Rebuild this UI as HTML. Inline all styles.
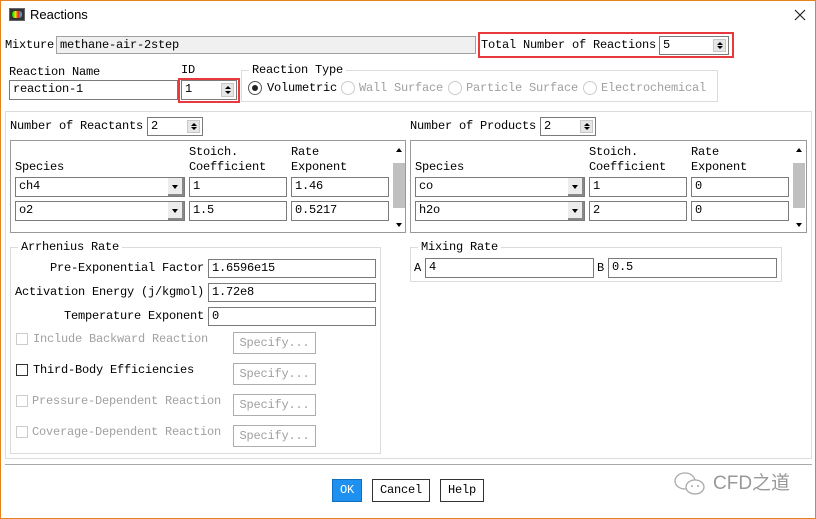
<!DOCTYPE html>
<html><head><meta charset="utf-8"><style>
*{box-sizing:border-box;margin:0;padding:0}
body{width:816px;height:519px;background:#fff;position:relative;overflow:hidden;font-family:"Liberation Mono","Noto Sans CJK SC",monospace;font-size:12px;letter-spacing:-0.2px;color:#000}
.a{position:absolute;white-space:nowrap;line-height:14px}
.b{position:absolute;border:1px solid #7a7a7a;background:#fff;padding-left:3px;line-height:17px;white-space:nowrap}
.g{color:#a0a0a0}
.grp{position:absolute;border:1px solid #dcdcdc}
.sp{position:absolute;right:2px;top:2px;width:13px;bottom:2px;background:#e6e6e6;border:1px solid #c8c8c8}
.sp:before{content:"";position:absolute;left:3px;top:2px;border:3px solid transparent;border-bottom:3px solid #000;border-top:0}
.sp:after{content:"";position:absolute;left:3px;bottom:2px;border:3px solid transparent;border-top:3px solid #000;border-bottom:0}
.dd{position:absolute;right:0;top:0;bottom:0;width:16px;background:#ececec;border-right:2px solid #888;border-bottom:2px solid #888}
.dd:after{content:"";position:absolute;left:4px;top:7px;border:3px solid transparent;border-top:4px solid #000;border-bottom:0}
.btn{position:absolute;border:1px solid #adadad;color:#a0a0a0;text-align:center;line-height:20px;height:22px;width:83px}
.cb{position:absolute;width:12px;height:12px;border:1px solid #ccc}
.rad{position:absolute;width:14px;height:14px;border:1px solid #ccc;border-radius:50%}
.red{position:absolute;border:2px solid #e8393f}
</style></head><body>
<div style="position:absolute;left:0;top:0;width:816px;height:519px;border:1px solid #e6821e"></div>
<!-- title -->
<div style="position:absolute;left:9px;top:8px;width:16px;height:13px;background:#333;border:1px solid #666"><div style="position:absolute;left:2px;top:2px;width:10px;height:7px;background:linear-gradient(90deg,#0c0 0,#ee0 35%,#f22 60%,#0cf 100%);border-radius:3px"></div></div>
<div class="a" style="left:30px;top:8px;font-family:'Liberation Sans',sans-serif;font-size:13px;letter-spacing:0">Reactions</div>
<svg style="position:absolute;left:794px;top:9px" width="12" height="12"><path d="M1 1L11 11M11 1L1 11" stroke="#222" stroke-width="1.2"/></svg>

<div class="a" style="left:5px;top:38px">Mixture</div>
<div class="b" style="left:56px;top:36px;width:420px;height:18px;background:#f0f0f0;border-color:#a0a0a0;line-height:16px">methane-air-2step</div>
<div class="red" style="left:478px;top:32px;width:256px;height:26px"></div>
<div class="a" style="left:481px;top:38px">Total Number of Reactions</div>
<div class="b" style="left:659px;top:36px;width:70px;height:19px">5<div class="sp"></div></div>

<div class="a" style="left:9px;top:65px">Reaction Name</div>
<div class="b" style="left:9px;top:80px;width:169px;height:20px">reaction-1</div>
<div class="a" style="left:181px;top:63px">ID</div>
<div class="red" style="left:178px;top:78px;width:62px;height:25px"></div>
<div class="b" style="left:181px;top:80px;width:56px;height:20px">1<div class="sp"></div></div>
<div class="grp" style="left:241px;top:70px;width:477px;height:32px"></div>
<div class="a" style="left:249px;top:63px;background:#fff;padding:0 3px">Reaction Type</div>
<div class="rad" style="left:248px;top:81px;border-color:#555"><div style="position:absolute;left:3px;top:3px;width:6px;height:6px;border-radius:50%;background:#222"></div></div>
<div class="a" style="left:267px;top:81px">Volumetric</div>
<div class="rad" style="left:341px;top:81px"></div><div class="a g" style="left:359px;top:81px">Wall Surface</div>
<div class="rad" style="left:448px;top:81px"></div><div class="a g" style="left:466px;top:81px">Particle Surface</div>
<div class="rad" style="left:583px;top:81px"></div><div class="a g" style="left:601px;top:81px">Electrochemical</div>

<div class="grp" style="left:5px;top:111px;width:807px;height:348px"></div>

<!-- reactants -->
<div class="a" style="left:10px;top:119px">Number of Reactants</div>
<div class="b" style="left:147px;top:117px;width:56px;height:19px">2<div class="sp"></div></div>
<div class="grp" style="left:10px;top:140px;width:396px;height:93px;border-color:#999"></div>
<div class="a" style="left:189px;top:145px">Stoich.</div><div class="a" style="left:291px;top:145px">Rate</div>
<div class="a" style="left:15px;top:160px">Species</div><div class="a" style="left:189px;top:160px">Coefficient</div><div class="a" style="left:291px;top:160px">Exponent</div>
<div class="b" style="left:15px;top:177px;width:170px;height:20px">ch4<div class="dd"></div></div>
<div class="b" style="left:189px;top:177px;width:98px;height:20px">1</div>
<div class="b" style="left:291px;top:177px;width:98px;height:20px">1.46</div>
<div class="b" style="left:15px;top:201px;width:170px;height:20px">o2<div class="dd"></div></div>
<div class="b" style="left:189px;top:201px;width:98px;height:20px">1.5</div>
<div class="b" style="left:291px;top:201px;width:98px;height:20px">0.5217</div>
<div style="position:absolute;left:393px;top:163px;width:12px;height:45px;background:#c0c0c0"></div>
<div style="position:absolute;left:396px;top:148px;border:3px solid transparent;border-bottom:4px solid #000;border-top:0"></div>
<div style="position:absolute;left:396px;top:223px;border:3px solid transparent;border-top:4px solid #000;border-bottom:0"></div>

<!-- products -->
<div class="a" style="left:410px;top:119px">Number of Products</div>
<div class="b" style="left:540px;top:117px;width:56px;height:19px">2<div class="sp"></div></div>
<div class="grp" style="left:410px;top:140px;width:397px;height:93px;border-color:#999"></div>
<div class="a" style="left:589px;top:145px">Stoich.</div><div class="a" style="left:691px;top:145px">Rate</div>
<div class="a" style="left:415px;top:160px">Species</div><div class="a" style="left:589px;top:160px">Coefficient</div><div class="a" style="left:691px;top:160px">Exponent</div>
<div class="b" style="left:415px;top:177px;width:170px;height:20px">co<div class="dd"></div></div>
<div class="b" style="left:589px;top:177px;width:98px;height:20px">1</div>
<div class="b" style="left:691px;top:177px;width:98px;height:20px">0</div>
<div class="b" style="left:415px;top:201px;width:170px;height:20px">h2o<div class="dd"></div></div>
<div class="b" style="left:589px;top:201px;width:98px;height:20px">2</div>
<div class="b" style="left:691px;top:201px;width:98px;height:20px">0</div>
<div style="position:absolute;left:793px;top:163px;width:12px;height:45px;background:#c0c0c0"></div>
<div style="position:absolute;left:796px;top:148px;border:3px solid transparent;border-bottom:4px solid #000;border-top:0"></div>
<div style="position:absolute;left:796px;top:223px;border:3px solid transparent;border-top:4px solid #000;border-bottom:0"></div>

<!-- arrhenius -->
<div class="grp" style="left:10px;top:247px;width:371px;height:207px"></div>
<div class="a" style="left:18px;top:240px;background:#fff;padding:0 3px">Arrhenius Rate</div>
<div class="a" style="left:50px;top:261px">Pre-Exponential Factor</div>
<div class="b" style="left:208px;top:259px;width:168px;height:19px">1.6596e15</div>
<div class="a" style="left:15px;top:285px">Activation Energy (j/kgmol)</div>
<div class="b" style="left:208px;top:283px;width:168px;height:19px">1.72e8</div>
<div class="a" style="left:64px;top:309px">Temperature Exponent</div>
<div class="b" style="left:208px;top:307px;width:168px;height:19px">0</div>
<div class="cb" style="left:16px;top:333px"></div><div class="a g" style="left:33px;top:332px">Include Backward Reaction</div>
<div class="btn" style="left:233px;top:332px">Specify...</div>
<div class="cb" style="left:16px;top:364px;border-color:#333"></div><div class="a" style="left:33px;top:363px">Third-Body Efficiencies</div>
<div class="btn" style="left:233px;top:363px">Specify...</div>
<div class="cb" style="left:16px;top:395px"></div><div class="a g" style="left:32px;top:394px">Pressure-Dependent Reaction</div>
<div class="btn" style="left:233px;top:394px">Specify...</div>
<div class="cb" style="left:16px;top:426px"></div><div class="a g" style="left:32px;top:425px">Coverage-Dependent Reaction</div>
<div class="btn" style="left:233px;top:425px">Specify...</div>

<!-- mixing -->
<div class="grp" style="left:410px;top:247px;width:372px;height:35px"></div>
<div class="a" style="left:418px;top:240px;background:#fff;padding:0 3px">Mixing Rate</div>
<div class="a" style="left:414px;top:261px">A</div>
<div class="b" style="left:425px;top:258px;width:169px;height:20px">4</div>
<div class="a" style="left:597px;top:261px">B</div>
<div class="b" style="left:608px;top:258px;width:169px;height:20px">0.5</div>

<div style="position:absolute;left:5px;top:464px;width:807px;height:1px;background:#aaa"></div>
<div class="a" style="left:332px;top:479px;width:30px;height:23px;background:#1e90f0;border:1px solid #1070c0;color:#fff;text-align:center;line-height:21px">OK</div>
<div class="a" style="left:372px;top:479px;width:58px;height:23px;border:1px solid #333;text-align:center;line-height:21px">Cancel</div>
<div class="a" style="left:440px;top:479px;width:44px;height:23px;border:1px solid #333;text-align:center;line-height:21px">Help</div>
<svg style="position:absolute;left:673px;top:469px" width="34" height="28"><ellipse cx="12" cy="12" rx="10" ry="8" fill="none" stroke="#aaa" stroke-width="1.3"/><ellipse cx="22" cy="18" rx="9" ry="7" fill="#fff" stroke="#aaa" stroke-width="1.3"/><circle cx="19" cy="17" r="1" fill="#aaa"/><circle cx="25" cy="17" r="1" fill="#aaa"/></svg>
<div class="a" style="left:713px;top:473px;font-family:'Liberation Sans','Noto Sans CJK SC',sans-serif;font-size:19px;color:#999;letter-spacing:0;line-height:22px">CFD之道</div>
</body></html>
